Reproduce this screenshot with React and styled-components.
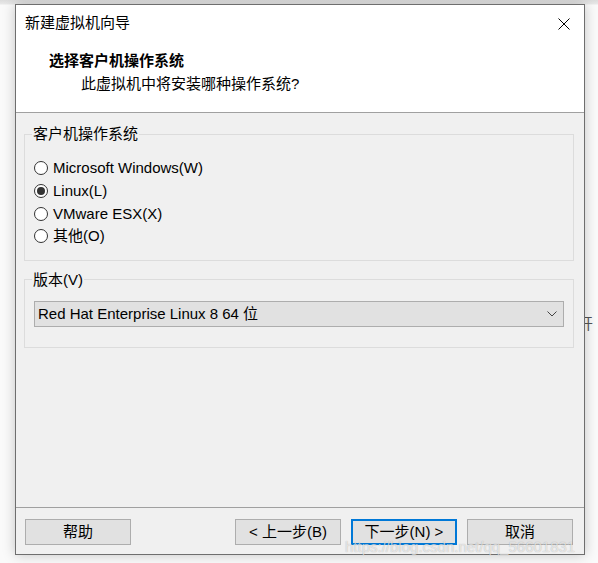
import styled, { createGlobalStyle } from "styled-components";

const GlobalStyle = createGlobalStyle`
  html, body {
    margin: 0;
    padding: 0;
    background: #f7f7f7;
  }
  body {
    font-family: "Liberation Sans", "Noto Sans CJK SC", sans-serif;
    font-size: 15px;
    color: #000;
  }
`;

const Page = styled.div`
  position: relative;
  width: 598px;
  height: 563px;
  overflow: hidden;
  padding: 4px 0 0 15px;
  box-sizing: border-box;
  background: linear-gradient(to bottom, #dcdcdc 0px, #e8e8e8 4px, #fafafa 5px);
`;

//text of the window behind, peeking out on the right
const BehindText = styled.span`
  position: absolute;
  left: 578px;
  top: 314px;
  color: #555;
  font-size: 15px;
  line-height: 20px;
`;

const Dialog = styled.div`
  position: relative;
  z-index: 1;
  width: 570px;
  height: 551px;
  box-sizing: border-box;
  border: 1px solid #6e6e6e;
  background: #f0f0f0;
  display: flex;
  flex-direction: column;
  box-shadow: 0 0 12px rgba(0, 0, 0, 0.22);
`;

const TitleBar = styled.div`
  height: 36px;
  background: #fff;
  display: flex;
  align-items: center;
  justify-content: space-between;
  padding: 0 14px 0 9px;
  line-height: 20px;
`;

const CloseButton = styled.svg`
  width: 12px;
  height: 12px;
  margin-top: 1px;
`;

const Header = styled.div`
  height: 72px;
  background: #fff;
  padding: 10px 0 0 33px;
  box-sizing: border-box;
  border-bottom: 1px solid #a0a0a0;
`;

const Heading = styled.div`
  font-weight: bold;
  line-height: 20px;
`;

const SubHeading = styled.div`
  margin: 3px 0 0 32px;
  line-height: 20px;
`;

const Body = styled.div`
  flex: 1;
  padding: 11px 10px 0 8px;
  display: flex;
  flex-direction: column;
  gap: 9px;
`;

const Group = styled.fieldset`
  margin: 0;
  border: 1px solid #dcdcdc;
  padding: ${(p) => p.$pad};
  display: flex;
  flex-direction: column;
`;

const Legend = styled.legend`
  padding: 0 1px;
  margin-left: -2px;
  line-height: 20px;
`;

const RadioRow = styled.label`
  height: 22.7px;
  display: flex;
  align-items: center;
  gap: 5px;
  line-height: 20px;
`;

const RadioDot = styled.span`
  width: 14px;
  height: 14px;
  box-sizing: border-box;
  border-radius: 50%;
  border: 1px solid #333;
  background: #fff;
  display: flex;
  align-items: center;
  justify-content: center;
  flex-shrink: 0;
  &::after {
    content: "";
    width: 8px;
    height: 8px;
    border-radius: 50%;
    background: ${(p) => (p.$checked ? "#333" : "transparent")};
  }
`;

const Select = styled.div`
  height: 26px;
  box-sizing: border-box;
  border: 1px solid #adadad;
  background: #e1e1e1;
  display: flex;
  align-items: center;
  justify-content: space-between;
  padding: 0 6px 0 3px;
  line-height: 20px;
`;

const Footer = styled.div`
  height: 47px;
  border-top: 1px solid #a0a0a0;
  box-sizing: border-box;
  display: flex;
  align-items: flex-start;
  padding: 11px 11px 0 9px;
`;

const Button = styled.div`
  width: 106px;
  height: 26px;
  box-sizing: border-box;
  border: ${(p) => (p.$focused ? "2px solid #0078d7" : "1px solid #adadad")};
  background: #e1e1e1;
  display: flex;
  align-items: center;
  justify-content: center;
  line-height: 20px;
  margin-left: ${(p) => p.$gap || 0}px;
`;

const Watermark = styled.span`
  position: absolute;
  z-index: 2;
  left: 345px;
  top: 538px;
  font-family: "Liberation Sans", sans-serif;
  font-size: 15px;
  color: rgba(255, 255, 255, 0.65);
  text-shadow: 0 0 1px rgba(0, 0, 0, 0.3);
  white-space: nowrap;
`;

const osList = [
  { label: "Microsoft Windows(W)" },
  { label: "Linux(L)", checked: true },
  { label: "VMware ESX(X)" },
  { label: "其他(O)" },
];

export default function App() {
  return (
    <>
      <GlobalStyle />
      <Page>
        <BehindText>开</BehindText>
        <Dialog>
          <TitleBar>
            <span>新建虚拟机向导</span>
            <CloseButton viewBox="0 0 12 12">
              <path d="M0.5 0.5 L11.5 11.5 M11.5 0.5 L0.5 11.5" stroke="#000" strokeWidth="1" fill="none" />
            </CloseButton>
          </TitleBar>
          <Header>
            <Heading>选择客户机操作系统</Heading>
            <SubHeading>此虚拟机中将安装哪种操作系统?</SubHeading>
          </Header>
          <Body>
            <Group $pad="13px 9px 12px 9px">
              <Legend>客户机操作系统</Legend>
              {osList.map((os) => (
                <RadioRow key={os.label}>
                  <RadioDot $checked={os.checked} />
                  {os.label}
                </RadioRow>
              ))}
            </Group>
            <Group $pad="11px 9px 20px 9px">
              <Legend>版本(V)</Legend>
              <Select>
                <span>Red Hat Enterprise Linux 8 64 位</span>
                <svg width="10" height="6" viewBox="0 0 10 6">
                  <polyline points="0.5,0.5 5,5 9.5,0.5" stroke="#444" strokeWidth="1" fill="none" />
                </svg>
              </Select>
            </Group>
          </Body>
          <Footer>
            <Button>帮助</Button>
            <Button $gap={104}>&lt; 上一步(B)</Button>
            <Button $gap={10} $focused>下一步(N) &gt;</Button>
            <Button $gap={10}>取消</Button>
          </Footer>
        </Dialog>
        <Watermark>https://blog.csdn.net/qq_56601831</Watermark>
      </Page>
    </>
  );
}
